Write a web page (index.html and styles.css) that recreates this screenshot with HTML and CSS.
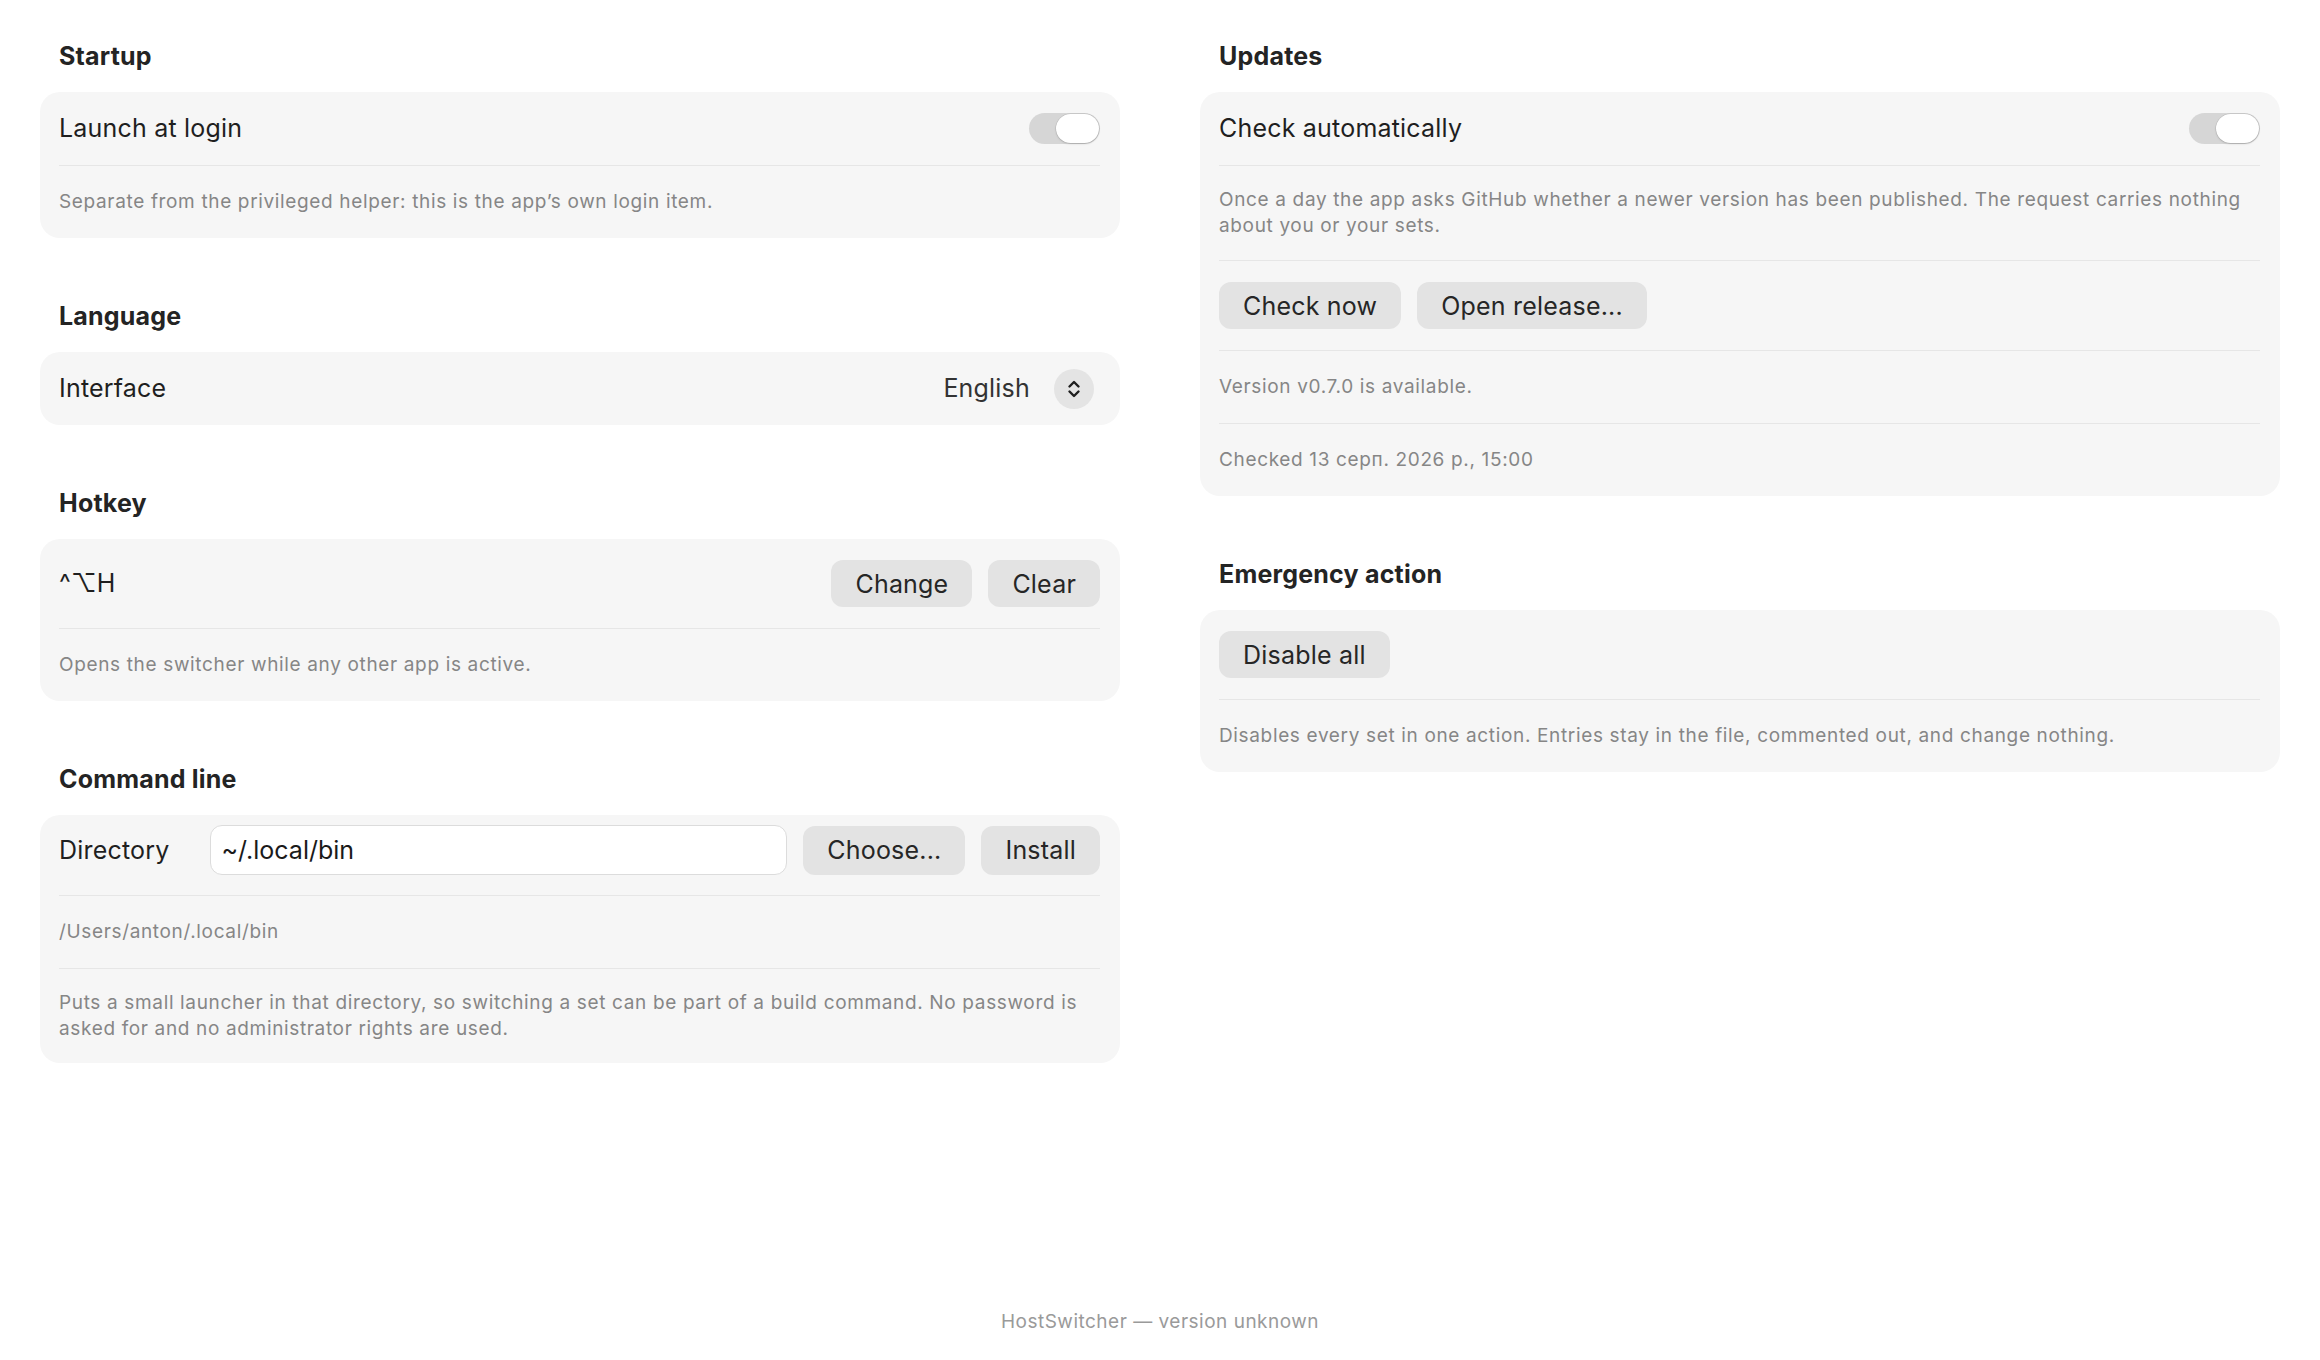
FILE: index.html
```html
<!DOCTYPE html>
<html lang="en">
<head>
    <meta charset="UTF-8">
    <title>HostSwitcher Settings</title>
    <link rel="stylesheet" href="styles.css">
</head>
<body>
    <div class="columns">
        <div class="column">
            <section class="group">
                <h2>Startup</h2>
                <div class="card">
                    <div class="row">
                        <span class="label">Launch at login</span>
                        <span class="toggle on"><span class="knob"></span></span>
                    </div>
                    <div class="row note">Separate from the privileged helper: this is the app’s own login item.</div>
                </div>
            </section>

            <section class="group">
                <h2>Language</h2>
                <div class="card">
                    <div class="row">
                        <span class="label">Interface</span>
                        <span class="picker">
                            <span class="picker-value">English</span>
                            <span class="stepper">
                                <svg width="16" height="24" viewBox="0 0 16 24" fill="none" stroke="#1f1f1f" stroke-width="2.4" stroke-linecap="round" stroke-linejoin="round">
                                    <path d="M3.5 9.5 L8 5 L12.5 9.5"/>
                                    <path d="M3.5 14.5 L8 19 L12.5 14.5"/>
                                </svg>
                            </span>
                        </span>
                    </div>
                </div>
            </section>

            <section class="group">
                <h2>Hotkey</h2>
                <div class="card">
                    <div class="row">
                        <span class="label">^⌥H</span>
                        <span class="actions">
                            <button class="btn">Change</button>
                            <button class="btn">Clear</button>
                        </span>
                    </div>
                    <div class="row note">Opens the switcher while any other app is active.</div>
                </div>
            </section>

            <section class="group">
                <h2>Command line</h2>
                <div class="card">
                    <div class="row field-row">
                        <span class="label">Directory</span>
                        <input class="text-field" type="text" value="~/.local/bin">
                        <button class="btn">Choose...</button>
                        <button class="btn">Install</button>
                    </div>
                    <div class="row note path">/Users/anton/.local/bin</div>
                    <div class="row note long">Puts a small launcher in that directory, so switching a set can be part of a build command. No password is asked for and no administrator rights are used.</div>
                </div>
            </section>
        </div>

        <div class="column">
            <section class="group">
                <h2>Updates</h2>
                <div class="card">
                    <div class="row">
                        <span class="label">Check automatically</span>
                        <span class="toggle on"><span class="knob"></span></span>
                    </div>
                    <div class="row note long">Once a day the app asks GitHub whether a newer version has been published. The request carries nothing about you or your sets.</div>
                    <div class="row">
                        <span class="actions">
                            <button class="btn">Check now</button>
                            <button class="btn">Open release...</button>
                        </span>
                    </div>
                    <div class="row note">Version v0.7.0 is available.</div>
                    <div class="row note">Checked 13 серп. 2026 р., 15:00</div>
                </div>
            </section>

            <section class="group">
                <h2>Emergency action</h2>
                <div class="card">
                    <div class="row">
                        <button class="btn">Disable all</button>
                    </div>
                    <div class="row note">Disables every set in one action. Entries stay in the file, commented out, and change nothing.</div>
                </div>
            </section>
        </div>
    </div>

    <footer class="footer">HostSwitcher — version unknown</footer>
</body>
</html>
```

FILE: styles.css
```css
html, body {
    height: 100%;
}
body {
    margin: 0;
    padding: 41px 40px 0;
    box-sizing: border-box;
    display: flex;
    flex-direction: column;
    background: #ffffff;
    color: #1f1f1f;
    font-family: Inter, "Noto Sans", sans-serif;
    font-size: 25px;
    letter-spacing: 0.2px;
}
.columns {
    display: grid;
    grid-template-columns: 1080px 1080px;
    column-gap: 80px;
    align-items: start;
}
.group {
    margin-bottom: 63px;
}
.group h2 {
    margin: 0 0 21px 19px;
    font-size: 25px;
    line-height: 30px;
    font-weight: 700;
    color: #242424;
}
.card {
    background: #f6f6f6;
    border-radius: 20px;
    padding: 0 20px 0 19px;
}
.row {
    display: flex;
    align-items: center;
    justify-content: space-between;
    padding: 21px 0;
    border-top: 1px solid #e6e6e6;
    line-height: 31px;
}
.row:first-child {
    border-top: none;
}
.label {
    color: #1f1f1f;
}
.note {
    display: block;
    padding: 23px 0;
    font-size: 19px;
    line-height: 26px;
    color: #868686;
    letter-spacing: 0.65px;
}
.note.long {
    padding: 21px 0;
}
.toggle {
    position: relative;
    width: 71px;
    height: 31px;
    border-radius: 16px;
    background: #d6d6d6;
}
.toggle .knob {
    position: absolute;
    top: 1px;
    right: 1px;
    width: 43px;
    height: 29px;
    border-radius: 15px;
    background: #ffffff;
    box-shadow: 0 0 0 0.5px rgba(0, 0, 0, 0.12), 0 1px 2px rgba(0, 0, 0, 0.15);
}
.picker {
    display: flex;
    align-items: center;
    gap: 24px;
}
.picker-value {
    color: #333333;
}
.stepper {
    display: flex;
    align-items: center;
    justify-content: center;
    width: 40px;
    height: 40px;
    margin: -5px 6px -5px 0;
    border-radius: 50%;
    background: #e4e4e4;
}
.actions {
    display: flex;
    gap: 16px;
}
.btn {
    height: 47px;
    padding: 0 24px;
    border: none;
    border-radius: 12px;
    background: #e3e3e3;
    color: #262626;
    font-family: inherit;
    font-size: 25px;
    letter-spacing: 0.2px;
}
.field-row {
    justify-content: flex-start;
    gap: 16px;
    padding: 10px 0 20px;
}
.field-row .label {
    margin-right: 24px;
}
.text-field {
    flex: 1;
    min-width: 0;
    height: 50px;
    box-sizing: border-box;
    padding: 0 11px;
    border: 1.5px solid #dcdcdc;
    border-radius: 12px;
    background: #ffffff;
    color: #1a1a1a;
    font-family: inherit;
    font-size: 25px;
}
.field-row .btn {
    height: 49px;
}
.footer {
    margin-top: auto;
    padding-bottom: 25px;
    text-align: center;
    font-size: 19px;
    line-height: 27px;
    color: #9a9a9a;
    letter-spacing: 0.5px;
}
```
